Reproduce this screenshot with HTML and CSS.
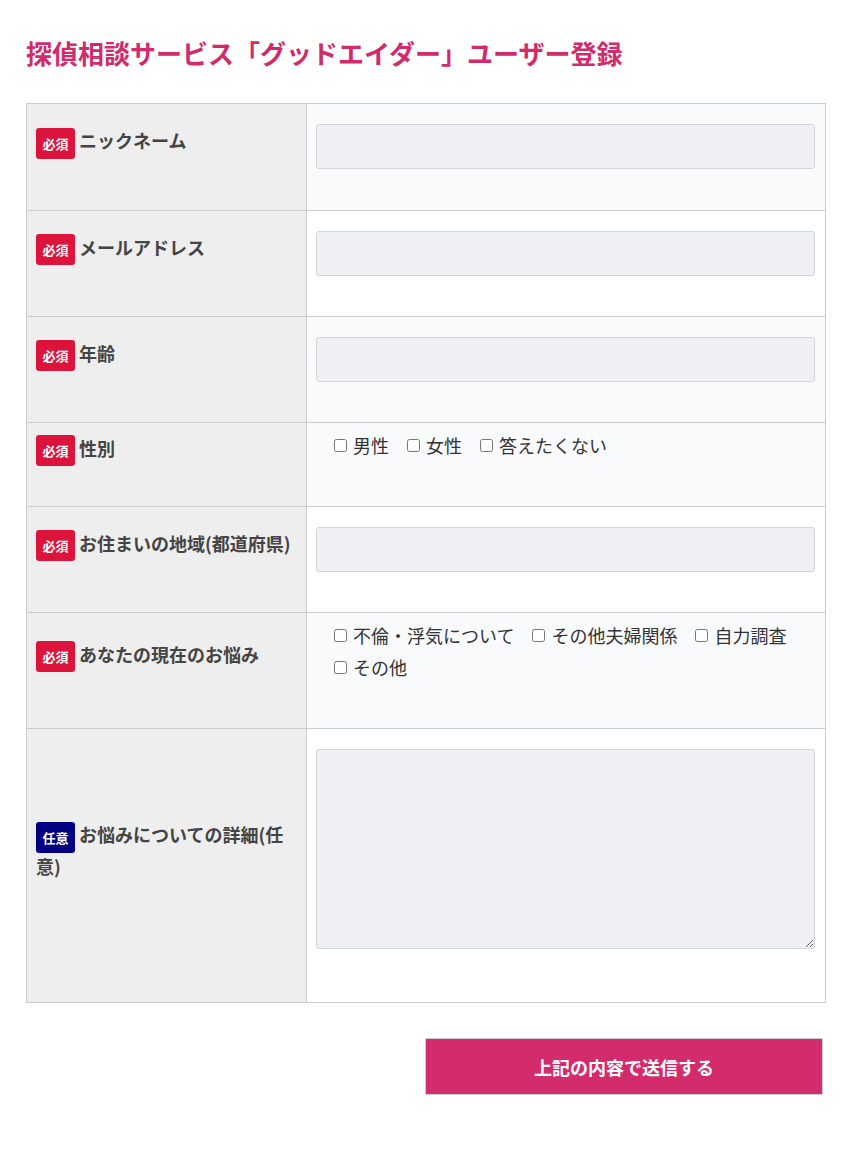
FILE: index.html
```html
<!DOCTYPE html>
<html lang="ja">
<head>
  <meta charset="UTF-8">
  <title>探偵相談サービス「グッドエイダー」ユーザー登録</title>
  <link rel="stylesheet" href="styles.css">
</head>
<body>

  <div class="wrap">
    <h1 class="title">探偵相談サービス「グッドエイダー」ユーザー登録</h1>

    <form class="entry">
      <table class="form-table">
        <tr class="shade">
          <th><span class="badge req">必須</span>ニックネーム</th>
          <td><input type="text" class="field"></td>
        </tr>
        <tr>
          <th><span class="badge req">必須</span>メールアドレス</th>
          <td><input type="email" class="field"></td>
        </tr>
        <tr class="shade">
          <th><span class="badge req">必須</span>年齢</th>
          <td><input type="text" class="field"></td>
        </tr>
        <tr class="shade">
          <th><span class="badge req">必須</span>性別</th>
          <td>
            <div class="checks">
              <label><input type="checkbox">男性</label>
              <label><input type="checkbox">女性</label>
              <label><input type="checkbox">答えたくない</label>
            </div>
          </td>
        </tr>
        <tr>
          <th><span class="badge req">必須</span>お住まいの地域(都道府県)</th>
          <td><input type="text" class="field"></td>
        </tr>
        <tr class="shade">
          <th><span class="badge req">必須</span>あなたの現在のお悩み</th>
          <td>
            <div class="checks">
              <label><input type="checkbox">不倫・浮気について</label>
              <label><input type="checkbox">その他夫婦関係</label>
              <label><input type="checkbox">自力調査</label>
              <label><input type="checkbox">その他</label>
            </div>
          </td>
        </tr>
        <tr>
          <th><span class="badge opt">任意</span>お悩みについての詳細(任意)</th>
          <td><textarea class="field area"></textarea></td>
        </tr>
      </table>

      <div class="actions">
        <button type="submit" class="submit">上記の内容で送信する</button>
      </div>
    </form>
  </div>

</body>
</html>
```

FILE: styles.css
```css
body {
  margin: 0;
  background: #fff;
  color: #333;
  font-family: "Noto Sans CJK JP", "Noto Sans", sans-serif;
}

.wrap {
  width: 800px;
  padding: 0 26px;
}

.title {
  margin: 0 0 32px;
  padding-top: 34px;
  font-size: 26px;
  line-height: 37px;
  font-weight: bold;
  color: #d02c6c;
}

.form-table {
  width: 800px;
  table-layout: fixed;
  border-collapse: collapse;
  border: 1px solid #ccc;
}

.form-table th,
.form-table td {
  border: 1px solid #ccc;
  padding: 10px 10px 40px;
  vertical-align: middle;
}

.form-table tr:first-child td {
  padding-bottom: 41px;
}

.form-table th {
  width: 260px;
  padding-left: 9px;
  background: #eee;
  text-align: left;
  font-size: 18px;
  line-height: 29px;
  font-weight: bold;
  color: #444;
}

.form-table td {
  padding-left: 9px;
  background: #fff;
}

.form-table tr.shade td {
  background: #f9fafc;
}

.badge {
  display: inline-block;
  width: 39px;
  height: 31px;
  margin: -1px 4px -1px 0;
  border-radius: 3px;
  color: #fff;
  font-size: 13px;
  line-height: 31px;
  text-align: center;
  font-weight: bold;
  vertical-align: middle;
}

.badge.req {
  background: #dc143c;
}

.badge.opt {
  background: #000080;
}

.field {
  display: block;
  box-sizing: border-box;
  width: 100%;
  height: 45px;
  margin: 10px 0 0;
  background: #eff0f3;
  border: 1px solid #d2d5d9;
  border-radius: 3px;
  font-family: inherit;
  font-size: 16px;
}

.field.area {
  height: 200px;
  margin-bottom: 13px;
  resize: vertical;
}

.checks {
  display: flex;
  flex-wrap: wrap;
  row-gap: 4px;
  column-gap: 18px;
  padding-left: 18px;
  margin: -2px 0 7px;
  font-size: 18px;
  line-height: 28px;
  color: #333;
}

.checks label {
  display: inline-flex;
  align-items: center;
}

.checks input {
  width: 13px;
  height: 13px;
  margin: 0 6px 0 0;
}

.actions {
  display: flex;
  justify-content: flex-end;
  margin-top: 35px;
  padding-right: 3px;
}

.submit {
  width: 398px;
  height: 57px;
  background: #d22c6c;
  border: 1px solid #ccc;
  color: #fff;
  font-family: inherit;
  font-size: 18px;
  font-weight: bold;
  cursor: pointer;
}
```
